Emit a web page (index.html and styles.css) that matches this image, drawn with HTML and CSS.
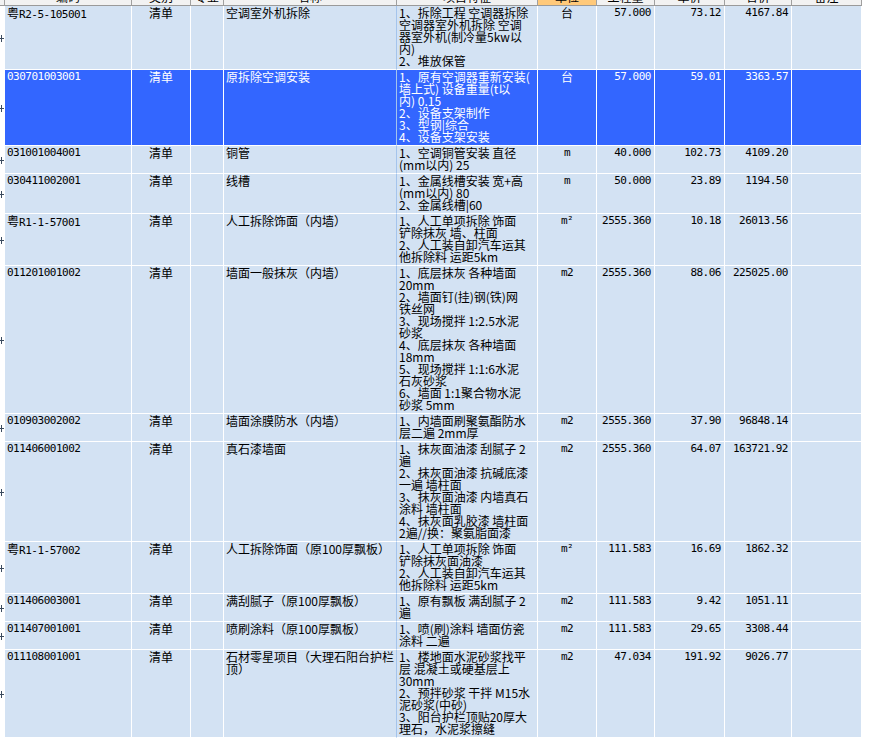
FILE: index.html
```html
<!DOCTYPE html>
<html lang="zh-CN">
<head>
<meta charset="utf-8">
<title>清单</title>
<link rel="stylesheet" href="styles.css">
</head>
<body>
<div class="sheet">
  <div class="row head">
    <div class="c strip"></div>
    <div class="c">编码</div>
    <div class="c">类别</div>
    <div class="c">专业</div>
    <div class="c">名称</div>
    <div class="c">项目特征</div>
    <div class="c active">单位</div>
    <div class="c">工程量</div>
    <div class="c">单价</div>
    <div class="c">合价</div>
    <div class="c">备注</div>
  </div>

  <div class="row">
    <div class="c strip"><i class="tick"></i></div>
    <div class="c code num"><span class="cjk">粤</span>R2-5-105001</div>
    <div class="c type">清单</div>
    <div class="c"></div>
    <div class="c name">空调室外机拆除</div>
    <div class="c desc">1、拆除工程 空调器拆除<br>空调器室外机拆除 空调<br>器室外机(制冷量5kw以<br>内)<br>2、堆放保管</div>
    <div class="c unit">台</div>
    <div class="c num r">57.000</div>
    <div class="c num r">73.12</div>
    <div class="c num r">4167.84</div>
    <div class="c"></div>
  </div>

  <div class="row sel">
    <div class="c strip"><i class="tick"></i></div>
    <div class="c code num">030701003001</div>
    <div class="c type">清单</div>
    <div class="c"></div>
    <div class="c name">原拆除空调安装</div>
    <div class="c desc">1、原有空调器重新安装(<br>墙上式) 设备重量(t以<br>内) 0.15<br>2、设备支架制作<br>3、型钢|综合<br>4、设备支架安装</div>
    <div class="c unit">台</div>
    <div class="c num r">57.000</div>
    <div class="c num r">59.01</div>
    <div class="c num r">3363.57</div>
    <div class="c"></div>
  </div>

  <div class="row">
    <div class="c strip"><i class="tick"></i></div>
    <div class="c code num">031001004001</div>
    <div class="c type">清单</div>
    <div class="c"></div>
    <div class="c name">铜管</div>
    <div class="c desc">1、空调铜管安装 直径<br>(mm以内) 25</div>
    <div class="c unit num">m</div>
    <div class="c num r">40.000</div>
    <div class="c num r">102.73</div>
    <div class="c num r">4109.20</div>
    <div class="c"></div>
  </div>

  <div class="row">
    <div class="c strip"><i class="tick"></i></div>
    <div class="c code num">030411002001</div>
    <div class="c type">清单</div>
    <div class="c"></div>
    <div class="c name">线槽</div>
    <div class="c desc">1、金属线槽安装 宽+高<br>(mm以内) 80<br>2、金属线槽|60</div>
    <div class="c unit num">m</div>
    <div class="c num r">50.000</div>
    <div class="c num r">23.89</div>
    <div class="c num r">1194.50</div>
    <div class="c"></div>
  </div>

  <div class="row">
    <div class="c strip"><i class="tick"></i></div>
    <div class="c code num"><span class="cjk">粤</span>R1-1-57001</div>
    <div class="c type">清单</div>
    <div class="c"></div>
    <div class="c name">人工拆除饰面（内墙）</div>
    <div class="c desc">1、人工单项拆除 饰面<br>铲除抹灰 墙、柱面<br>2、人工装自卸汽车运其<br>他拆除料 运距5km</div>
    <div class="c unit num">m²</div>
    <div class="c num r">2555.360</div>
    <div class="c num r">10.18</div>
    <div class="c num r">26013.56</div>
    <div class="c"></div>
  </div>

  <div class="row">
    <div class="c strip"><i class="tick"></i></div>
    <div class="c code num">011201001002</div>
    <div class="c type">清单</div>
    <div class="c"></div>
    <div class="c name">墙面一般抹灰（内墙）</div>
    <div class="c desc">1、底层抹灰 各种墙面<br>20mm<br>2、墙面钉(挂)钢(铁)网<br>铁丝网<br>3、现场搅拌 1:2.5水泥<br>砂浆<br>4、底层抹灰 各种墙面<br>18mm<br>5、现场搅拌 1:1:6水泥<br>石灰砂浆<br>6、墙面 1:1聚合物水泥<br>砂浆 5mm</div>
    <div class="c unit num">m2</div>
    <div class="c num r">2555.360</div>
    <div class="c num r">88.06</div>
    <div class="c num r">225025.00</div>
    <div class="c"></div>
  </div>

  <div class="row">
    <div class="c strip"><i class="tick"></i></div>
    <div class="c code num">010903002002</div>
    <div class="c type">清单</div>
    <div class="c"></div>
    <div class="c name">墙面涂膜防水（内墙）</div>
    <div class="c desc">1、内墙面刷聚氨酯防水<br>层二遍 2mm厚</div>
    <div class="c unit num">m2</div>
    <div class="c num r">2555.360</div>
    <div class="c num r">37.90</div>
    <div class="c num r">96848.14</div>
    <div class="c"></div>
  </div>

  <div class="row">
    <div class="c strip"><i class="tick"></i></div>
    <div class="c code num">011406001002</div>
    <div class="c type">清单</div>
    <div class="c"></div>
    <div class="c name">真石漆墙面</div>
    <div class="c desc">1、抹灰面油漆 刮腻子 2<br>遍<br>2、抹灰面油漆 抗碱底漆<br>一遍 墙柱面<br>3、抹灰面油漆 内墙真石<br>涂料 墙柱面<br>4、抹灰面乳胶漆 墙柱面<br>2遍//换：聚氨脂面漆</div>
    <div class="c unit num">m2</div>
    <div class="c num r">2555.360</div>
    <div class="c num r">64.07</div>
    <div class="c num r">163721.92</div>
    <div class="c"></div>
  </div>

  <div class="row">
    <div class="c strip"><i class="tick"></i></div>
    <div class="c code num"><span class="cjk">粤</span>R1-1-57002</div>
    <div class="c type">清单</div>
    <div class="c"></div>
    <div class="c name">人工拆除饰面（原100厚飘板）</div>
    <div class="c desc">1、人工单项拆除 饰面<br>铲除抹灰面油漆<br>2、人工装自卸汽车运其<br>他拆除料 运距5km</div>
    <div class="c unit num">m²</div>
    <div class="c num r">111.583</div>
    <div class="c num r">16.69</div>
    <div class="c num r">1862.32</div>
    <div class="c"></div>
  </div>

  <div class="row">
    <div class="c strip"><i class="tick"></i></div>
    <div class="c code num">011406003001</div>
    <div class="c type">清单</div>
    <div class="c"></div>
    <div class="c name">满刮腻子（原100厚飘板）</div>
    <div class="c desc">1、原有飘板 满刮腻子 2<br>遍</div>
    <div class="c unit num">m2</div>
    <div class="c num r">111.583</div>
    <div class="c num r">9.42</div>
    <div class="c num r">1051.11</div>
    <div class="c"></div>
  </div>

  <div class="row">
    <div class="c strip"><i class="tick"></i></div>
    <div class="c code num">011407001001</div>
    <div class="c type">清单</div>
    <div class="c"></div>
    <div class="c name">喷刷涂料（原100厚飘板）</div>
    <div class="c desc">1、喷(刷)涂料 墙面仿瓷<br>涂料 二遍</div>
    <div class="c unit num">m2</div>
    <div class="c num r">111.583</div>
    <div class="c num r">29.65</div>
    <div class="c num r">3308.44</div>
    <div class="c"></div>
  </div>

  <div class="row">
    <div class="c strip"><i class="tick"></i></div>
    <div class="c code num">011108001001</div>
    <div class="c type">清单</div>
    <div class="c"></div>
    <div class="c name">石材零星项目（大理石阳台护栏<br>顶）</div>
    <div class="c desc">1、楼地面水泥砂浆找平<br>层 混凝土或硬基层上<br>30mm<br>2、预拌砂浆 干拌 M15水<br>泥砂浆(中砂)<br>3、阳台护栏顶贴20厚大<br>理石，水泥浆擦缝</div>
    <div class="c unit num">m2</div>
    <div class="c num r">47.034</div>
    <div class="c num r">191.92</div>
    <div class="c num r">9026.77</div>
    <div class="c"></div>
  </div>
</div>
</body>
</html>
```

FILE: styles.css
```css
html, body {
  margin: 0;
  padding: 0;
  background: #ffffff;
}

body {
  font-family: "Noto Sans CJK SC", "Noto Sans", sans-serif;
  font-size: 12px;
  line-height: 12px;
  color: #000000;
  overflow: hidden;
}

.sheet {
  width: 862px;
}

.row {
  display: grid;
  grid-template-columns: 5px 127px 59px 33px 173px 141px 59px 58px 70px 67px 70px;
}

.c {
  box-sizing: border-box;
  background: #d3e2f3;
  border-right: 1px solid #ffffff;
  border-bottom: 1px solid #ffffff;
  padding: 1px 2px 2px 2px;
  white-space: nowrap;
  overflow: hidden;
}

.c:nth-child(5) {
  border-right-color: #a4c4ec;
}

.c.strip {
  background: #ffffff;
  border: none;
  padding: 0;
  display: flex;
  align-items: center;
}

.tick {
  display: block;
  width: 4px;
  height: 7px;
  background:
    linear-gradient(#3b4b5e, #3b4b5e) 1px 0 / 1px 7px no-repeat,
    linear-gradient(#3b4b5e, #3b4b5e) 0 3px / 4px 1px no-repeat;
}

.head {
  margin-top: -11px;
}

.head .c {
  height: 17px;
  background: #f2f2f2;
  border-right: 1px solid #a0a0a0;
  border-bottom: 1px solid #9a9a9a;
  text-align: center;
  padding: 2px 0 0 0;
}

.head .c.strip {
  background: #f2f2f2;
  border-bottom: 1px solid #9a9a9a;
}

.head .c.active {
  background: #ffc97a;
}

.sel .c {
  background: #3366ff;
  color: #ffffff;
}

.sel .c.strip {
  background: #ffffff;
}

.num {
  font-family: "DejaVu Sans Mono", "Liberation Mono", monospace;
  font-size: 11px;
  letter-spacing: -0.5px;
}

.cjk {
  font-family: "Noto Sans CJK SC", sans-serif;
  font-size: 12px;
  letter-spacing: 0;
}

.r {
  text-align: right;
  padding-right: 3px;
}

.type,
.unit {
  text-align: center;
}

.desc {
  padding-left: 2px;
}
```
